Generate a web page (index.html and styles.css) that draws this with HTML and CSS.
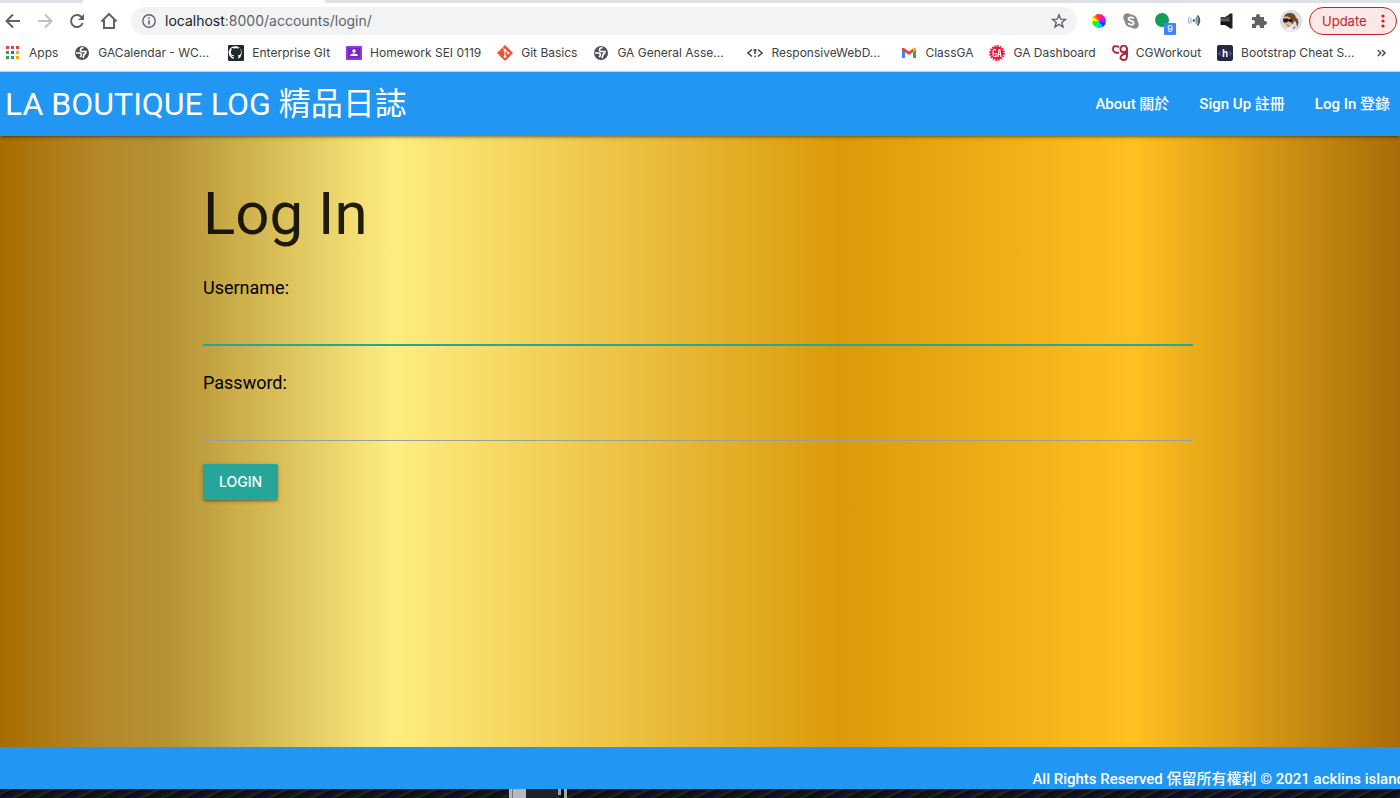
FILE: index.html
```html
<!DOCTYPE html>
<html lang="en">
<head>
<meta charset="utf-8">
<title>La Boutique Log</title>
<link rel="stylesheet" href="styles.css">
</head>
<body>
<div class="browser">
  <div class="tab-strip"><div class="tab-active"></div></div>
  <div class="toolbar">
    <div class="nav-buttons">
      <button class="icon-button" aria-label="Back"><svg class="glyph" viewBox="0 0 18 18"><path d="M16 9H3M9 2.500 2.500 9 9 15.500" fill="none" stroke="#5f6368" stroke-width="2"/></svg></button>
      <button class="icon-button" aria-label="Forward"><svg class="glyph" viewBox="0 0 18 18"><path d="M2 9h13M9 2.500 15.500 9 9 15.500" fill="none" stroke="#bdc1c6" stroke-width="2"/></svg></button>
      <button class="icon-button" aria-label="Reload"><svg class="glyph" viewBox="0 0 18 18"><path d="M14.700 11A6 6 0 1 1 13.400 4.900L15 6.500" fill="none" stroke="#5f6368" stroke-width="2"/><path d="M16 2v6h-6z" fill="#5f6368"/></svg></button>
      <button class="icon-button" aria-label="Home"><svg class="glyph" viewBox="0 0 18 18"><path d="M1.500 9.500 9 2l7.500 7.500M4 8v8h10V8" fill="none" stroke="#5f6368" stroke-width="2"/></svg></button>
    </div>
    <div class="address">
      <svg class="info" viewBox="0 0 14 14"><circle cx="7" cy="7" r="6.200" fill="none" stroke="#5f6368" stroke-width="1.400"/><path d="M7 6.200v4.300M7 3.500V5" stroke="#5f6368" stroke-width="1.600"/></svg>
      <span class="url">localhost<span class="url-path">:8000/accounts/login/</span></span>
      <button class="icon-button star" aria-label="Bookmark"><svg class="glyph-small" viewBox="0 0 16 16"><path d="m8 1.800 1.700 4.300 4.700.3-3.600 3 1.200 4.600-4-2.600L4 14l1.200-4.600-3.600-3 4.700-.3z" fill="none" stroke="#5f6368" stroke-width="1.400"/></svg></button>
    </div>
    <div class="extensions">
      <div class="wheel"></div>
      <svg class="ext" viewBox="0 0 16 16"><circle cx="8" cy="8" r="6.500" fill="#8b8b8b"/><circle cx="4.500" cy="4.500" r="4.300" fill="#8b8b8b"/><circle cx="11.500" cy="11.500" r="4.300" fill="#8b8b8b"/><path d="M10.800 5.700C9.800 3.700 5.500 4 5.500 6c0 2.300 5.200 1.400 5.200 3.900 0 2.300-4.600 2.300-5.400.1" fill="none" stroke="#fff" stroke-width="1.700"/></svg>
      <div class="counter"><span class="counter-badge">9</span></div>
      <svg class="ext" viewBox="0 0 16 16"><circle cx="7" cy="7.500" r="1.500" fill="#68747b"/><path d="M4.500 5q-1.500 2.500 0 5M2.500 4q-2 3.500 0 7" fill="none" stroke="#9ebbd0" stroke-width="1.300"/><path d="M9 4.500q2 3 0 6" fill="none" stroke="#7290a4" stroke-width="1.700"/><path d="M10.500 2.500q3.500 5 0 10" fill="none" stroke="#485c6b" stroke-width="1.900"/></svg>
      <svg class="ext" viewBox="0 0 16 16"><defs><linearGradient id="speaker" x2="0" y2="1"><stop stop-color="#111"/><stop offset=".45" stop-color="#666"/><stop offset=".6" stop-color="#111"/></linearGradient></defs><path d="M1.500 4h4.500l5-3V15l-5-3H1.500z" fill="url(#speaker)"/><path d="M10.500.5h3v15h-3z" fill="#222"/></svg>
      <svg class="ext" viewBox="0 0 16 16"><path d="M1 4h4V3a2 2 0 0 1 4 0v1h4v4h1a2 2 0 0 1 0 4h-1v3H9v-1a2 2 0 0 0-4 0v1H1v-4h1a2 2 0 0 0 0-4H1z" fill="#5f6368"/></svg>
      <svg class="avatar" viewBox="0 0 22 22"><circle cx="11" cy="11" r="11" fill="#dadce0"/><path d="M5 20q4-4 8-3l4 2q-6 4-12 1z" fill="#edf5fc"/><path d="M4 7q2-3 6-2l3 4-1 6-4 3-4-4z" fill="#e3b98e"/><path d="M4 7q1-4 6-4 5 0 6 5 2 0 2.500 5L17 17l-1-5-2-1-1 3-2-1V9Q8 5 4 7z" fill="#734623"/><path d="M3 8.500h5l1 1 3-1V12H9.500L8 11l-1 1.500H3.500z" fill="#172026"/><path d="m7 15 2 1" stroke="#b45b48"/><path d="m13 19 2-2" stroke="#527bc0" stroke-width="1.500"/></svg>
    </div>
    <button class="update">Update<svg class="dots" viewBox="0 0 4 16"><g fill="#c5221f"><circle cx="2" cy="3" r="1.600"/><circle cx="2" cy="8" r="1.600"/><circle cx="2" cy="13" r="1.600"/></g></svg></button>
  </div>
  <nav class="bookmarks" aria-label="Bookmarks">
    <a class="bookmark" href="#"><svg class="fav" viewBox="0 0 16 16"><path d="M1 1h3v3H1zM6 1h3v3H6zM11 1h3v3h-3z" fill="#ea4335"/><path d="M1 6h3v3H1zM1 11h3v3H1zM6 11h3v3H6z" fill="#34a05a"/><path d="M6 6h3v3H6z" fill="#1a73e8"/><path d="M11 6h3v3h-3zM11 11h3v3h-3z" fill="#f9ab00"/></svg>Apps</a>
    <a class="bookmark long" href="#"><svg class="fav" viewBox="0 0 16 16"><circle cx="8" cy="8" r="7" fill="#4d5156"/><path d="M9.500 2.500 7 3.500Q5.500 6 8 6.500h4q0 2-2 3L9 13M2 8h4q2 .5 1 3l-1 1" fill="none" stroke="#fff" stroke-width="1.700"/></svg>GACalendar - WC...</a>
    <a class="bookmark" href="#"><svg class="fav" viewBox="0 0 16 16"><rect width="16" height="16" rx="1" fill="#24292e"/><path d="M5.800 14v-2.200C3.800 12 3.600 10.800 3 10.500c1-.2 1.200 1 2.800.8q.1-.7.500-1C3.800 10 3 8.800 3 7q0-1.200.8-2-.3-1 .1-2 1 0 2 .8 2.100-.6 4.200 0 1-.8 2-.8.400 1 .1 2 .8.800.8 2c0 1.800-.8 3-3.300 3.300q.5.400.5 1.200V14q2.900-1.200 3.200-4.500A6.500 6.500 0 1 0 5.800 14" fill="#fff"/><path d="M5.800 14v-2.200C3.800 12 3.600 10.800 3 10.500c1-.2 1.200 1 2.800.8q.1-.7.500-1C3.800 10 3 8.800 3 7q0-1.200.8-2-.3-1 .1-2 1 0 2 .8 2.100-.6 4.200 0 1-.8 2-.8.400 1 .1 2 .8.800.8 2c0 1.800-.8 3-3.300 3.300q.5.400.5 1.200V14z" fill="#24292e"/></svg>Enterprise GIt</a>
    <a class="bookmark" href="#"><svg class="fav" viewBox="0 0 16 16"><rect y="1" width="16" height="14" rx="1" fill="#9334e6"/><path d="M2 3h12v10H2z" fill="#7627bb"/><circle cx="8" cy="6" r="1.700" fill="#fff"/><path d="M4 11q0-2.500 4-2.500t4 2.500z" fill="#fff"/></svg>Homework SEI 0119</a>
    <a class="bookmark" href="#"><svg class="fav" viewBox="0 0 16 16"><path d="m8 0 8 8-8 8-8-8z" fill="#f05033"/><path d="m6 2.500 2 2.500v6.500M8 5l3.500 3" stroke="#fff" fill="none"/><g fill="#fff"><circle cx="8" cy="5.300" r="1.300"/><circle cx="8" cy="11.500" r="1.300"/><circle cx="11.200" cy="8" r="1.300"/></g></svg>Git Basics</a>
    <a class="bookmark long" href="#"><svg class="fav" viewBox="0 0 16 16"><circle cx="8" cy="8" r="7" fill="#4d5156"/><path d="M9.500 2.500 7 3.500Q5.500 6 8 6.500h4q0 2-2 3L9 13M2 8h4q2 .5 1 3l-1 1" fill="none" stroke="#fff" stroke-width="1.700"/></svg>GA General Asse...</a>
    <a class="bookmark long" href="#"><svg class="fav" viewBox="0 0 16 16"><path d="M5 4.500.8 8 5 11.500M11 4.500 15.200 8 11 11.500M8 4v5M8 10.500v1.700M6.500 5h3" fill="none" stroke="#3b4055" stroke-width="1.500"/></svg>ResponsiveWebD...</a>
    <a class="bookmark" href="#"><svg class="fav" viewBox="0 0 16 16"><path d="M1 4v9h3V6z" fill="#4285f4"/><path d="M12 6v7h3V4z" fill="#34a853"/><path d="M1 3v2l7 5 4-3V3.500L8 6.500 3 3z" fill="#ea4335"/><path d="M12 3.500V7l3-2V3.500q-1-2-3 0z" fill="#fbbc04"/></svg>ClassGA</a>
    <a class="bookmark" href="#"><svg class="fav" viewBox="0 0 16 16"><circle cx="8" cy="8" r="6.500" fill="#e51837"/><circle cx="8" cy="8" r="7" fill="none" stroke="#e51837" stroke-width="1.800" stroke-dasharray="1.600 1.150"/><path d="M7 5.500Q6.500 4 5 4.500 4 5 4 8t1 3.500h2V8.500H5.500M8.800 12 10 4.500h.8L12 12M9.300 9.500h2.200" fill="none" stroke="#fff" stroke-width="1.200"/></svg>GA Dashboard</a>
    <a class="bookmark" href="#"><svg class="fav" viewBox="0 0 16 16"><path d="M7 2Q1-.5 1 4t6 3.500M15 4.500a3.300 3.300 0 1 0-6.500 0 3.300 3.300 0 0 0 6.500 0V11q0 4.500-4 4-4-1-1.500-4.500 2-2 5-2" fill="none" stroke="#b8202f" stroke-width="1.900"/></svg>CGWorkout</a>
    <a class="bookmark long" href="#"><svg class="fav" viewBox="0 0 16 16"><rect width="16" height="16" rx="2" fill="#252a42"/><path d="M3.500 6.500 2 8.500l1.500 2M12.500 6.500l1.500 2-1.500 2" fill="none" stroke="#868baa"/><text class="h-text" x="8" y="12" text-anchor="middle">h</text></svg>Bootstrap Cheat S...</a>
    <button class="more" aria-label="More bookmarks"><svg class="more-icon" viewBox="0 0 10 10"><path d="m1.500 2.500 2.500 2.500-2.500 2.500M5 2.500l2.500 2.500L5 7.500" fill="none" stroke="#4d5156" stroke-width="1.300"/></svg></button>
  </nav>
</div>
<header class="site-header">
  <a class="brand" href="#">LA BOUTIQUE LOG 精品日誌</a>
  <nav class="site-nav"><a href="#">About 關於</a><a href="#">Sign Up 註冊</a><a href="#">Log In 登錄</a></nav>
</header>
<main class="page">
  <form class="login-form">
    <h1>Log In</h1>
    <label for="username">Username:</label>
    <input class="field active" id="username" type="text">
    <label for="password">Password:</label>
    <input class="field" id="password" type="password">
    <button class="login-button" type="button">LOGIN</button>
  </form>
</main>
<footer class="site-footer"><span class="rights">All Rights Reserved 保留所有權利 © 2021 acklins island</span></footer>
<div class="desktop"><svg class="device" viewBox="0 0 58 9"><path d="M0 0h58v9H0z" fill="#242124"/><path d="M0 0h17v9H0z" fill="#b9b9bb"/><path d="M3 0h1v9H3z" fill="#777"/><path d="M49 0h5v6h-5z" fill="#91a2c5"/><path d="M52 0h3v9h-3z" fill="#101013"/><path d="M55 0h3v9h-3z" fill="#aaa"/></svg></div>
</body>
</html>
```
FILE: styles.css
```css
* { box-sizing: border-box; }
body { margin: 0; height: 100vh; display: flex; flex-direction: column; overflow: hidden; font-family: Roboto, "Noto Sans CJK TC", sans-serif; }
a { color: inherit; text-decoration: none; }
button { font: inherit; border: 0; padding: 0; background: none; }
svg { display: block; flex: none; }
.browser { flex: none; background: #fff; border-bottom: 1px solid #dadce0; font-family: Inter, sans-serif; }
.tab-strip { height: 3px; background: #dee1e6; padding-left: 83px; }
.tab-active { width: 242px; height: 3px; background: #fff; }
.toolbar { height: 36px; display: flex; align-items: center; padding: 0 3px 0 4px; }
.nav-buttons { display: flex; gap: 14px; margin-right: 13px; }
.icon-button { display: flex; }
.glyph { width: 18px; height: 18px; }
.address { flex: 1; height: 28px; border-radius: 14px; background: #f1f3f4; display: flex; align-items: center; padding: 0 10px 0 11px; }
.info { width: 14px; height: 14px; margin-right: 9px; }
.url { font-size: 14px; line-height: 20px; color: #202124; }
.url-path { color: #5f6368; }
.star { margin-left: auto; }
.glyph-small { width: 16px; height: 16px; }
.extensions { display: flex; align-items: center; gap: 16px; margin: 0 7px 0 14px; }
.wheel { width: 14px; height: 14px; border-radius: 50%; margin: 0 1px; background: conic-gradient(#f33 0 30deg, #f0f 30deg 80deg, #73f 80deg 110deg, #04f 110deg 150deg, #0cf 150deg 190deg, #0f7 190deg 220deg, #1f0 220deg 265deg, #ff0 265deg 300deg, #f80 300deg 330deg, #f33 330deg); }
.ext { width: 16px; height: 16px; }
.counter { position: relative; width: 16px; height: 16px; }
.counter::before { content: ""; display: block; width: 14px; height: 14px; border-radius: 50%; background: #129d58; }
.counter-badge { position: absolute; left: 9px; top: 10px; width: 12px; height: 12px; border-radius: 1px; background: #4285f4; color: #fff; font-size: 9px; font-weight: 500; line-height: 12px; text-align: center; }
.avatar { width: 22px; height: 22px; margin: 0 -3px; }
.update { height: 28px; width: 88px; margin-left: 3px; border: 1px solid #c5221f; border-radius: 14px; background: #fce8e6; color: #c5221f; font-size: 13px; display: flex; align-items: center; justify-content: space-between; padding: 0 11px 0 12px; }
.dots { width: 4px; height: 16px; }
.bookmarks { height: 32px; padding: 0 12px 4px 5px; display: flex; align-items: center; color: #3c4043; font-size: 12px; line-height: 16px; white-space: nowrap; }
.bookmark { display: flex; align-items: center; gap: 8px; margin-right: 16px; }
.long { min-width: 138px; }
.fav { width: 16px; height: 16px; }
.h-text { font: 700 10px "Liberation Sans", sans-serif; fill: #fff; }
.more { margin-left: auto; }
.more-icon { width: 12px; height: 12px; }
.site-header { flex: none; height: 64px; background: #2196f3; color: #fff; display: flex; align-items: center; justify-content: space-between; padding: 0 10px 0 5px; position: relative; box-shadow: 0 2px 2px rgba(0,0,0,.14), 0 3px 1px -2px rgba(0,0,0,.12), 0 1px 5px rgba(0,0,0,.2); }
.brand { font-size: 32px; line-height: 64px; }
.site-nav { display: flex; gap: 30px; font-size: 15px; font-weight: 500; line-height: 64px; }
.page { flex: 1; background: linear-gradient(to right, #a86c00 0%, #b48829 7%, #b59232 12%, #ffed80 28%, #db9a0a 60%, #ffc020 81%, #a86c08 100%); }
.login-form { margin: 0 207px 0 203px; padding-top: 45px; display: flex; flex-direction: column; align-items: flex-start; }
h1 { margin: 0 0 27px; font-size: 60px; font-weight: 400; line-height: 66px; color: rgba(0,0,0,.87); }
label { font-size: 18px; line-height: 27px; }
.field { width: 100%; height: 45px; margin: 0 0 23px; padding: 0; border: 0; border-bottom: 1px solid #9e9e9e; outline: 0; background: transparent; font-size: 16px; line-height: 24px; }
.active { border-bottom: 2px solid #26a69a; }
.login-button { height: 36px; padding: 0 16px; border-radius: 2px; background: #26a69a; color: #fff; font: 500 14px/36px Inter, sans-serif; box-shadow: 0 2px 2px rgba(0,0,0,.14), 0 3px 1px -2px rgba(0,0,0,.12), 0 1px 5px rgba(0,0,0,.2); }
.site-footer { flex: none; height: 42px; padding-top: 21px; background: #2196f3; color: #fff; overflow: hidden; display: flex; justify-content: flex-end; }
.rights { margin-right: -5px; white-space: nowrap; font-size: 15px; font-weight: 500; line-height: 22px; }
.desktop { flex: none; height: 9px; padding-left: 509px; background: repeating-linear-gradient(155deg, #14131e 0 3px, #2b2228 4px 5px, #100f19 6px 9px); }
.device { width: 58px; height: 9px; }
```
